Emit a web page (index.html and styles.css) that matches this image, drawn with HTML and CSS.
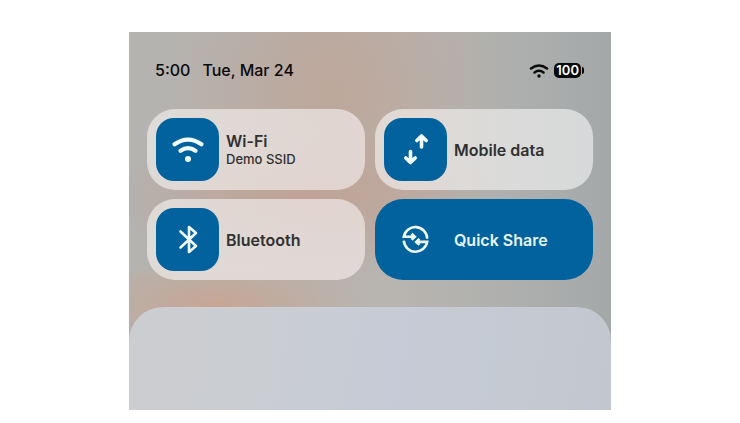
FILE: index.html
```html
<!DOCTYPE html>
<html lang="en">
<head>
    <meta charset="UTF-8">
    <meta name="viewport" content="width=device-width, initial-scale=1">
    <title>Quick Settings</title>
    <link rel="stylesheet" href="styles.css">
</head>
<body>

<main class="screen">
    <!-- status bar -->
    <header class="status-bar">
        <time>5:00</time>
        <span>Tue, Mar 24</span>
        <div class="status-icons">
            <svg class="status-wifi" viewBox="0 0 20 16" aria-hidden="true">
                <path d="M2 5.5Q10 -.5 18 5.5M5.5 9.5Q10 6 14.5 9.5"/>
                <circle cx="10" cy="13" r="1.7"/>
            </svg>
            <span class="battery">100</span>
        </div>
    </header>

    <!-- quick settings tiles -->
    <section class="tiles">
        <button class="tile" type="button">
            <span class="tile-icon">
                <svg viewBox="0 0 36 36" stroke-width="4.2" aria-hidden="true">
                    <path d="M4.5 12.3Q18 2.9 31.5 12.3M10.5 18.8Q18 13.6 25.5 18.8"/>
                    <circle class="dot" cx="18" cy="27" r="3"/>
                </svg>
            </span>
            <span class="tile-text">
                <span class="tile-label">Wi-Fi</span>
                <span class="tile-sub">Demo SSID</span>
            </span>
        </button>
        <button class="tile" type="button">
            <span class="tile-icon">
                <svg viewBox="0 0 36 36" stroke-width="3.6" aria-hidden="true">
                    <path d="M23.5 15V5M18.8 8.5L23.5 4L28.2 8.5M12.5 19.5V30M7.8 26L12.5 30.5L17.2 26"/>
                </svg>
            </span>
            <span class="tile-label">Mobile data</span>
        </button>
        <button class="tile" type="button">
            <span class="tile-icon">
                <svg viewBox="0 0 36 36" stroke-width="2.6" aria-hidden="true">
                    <path d="M10.5 9.5L26 24L19 30V5L26 11L10.5 25.5"/>
                </svg>
            </span>
            <span class="tile-label">Bluetooth</span>
        </button>
        <button class="tile tile-active" type="button">
            <span class="tile-icon">
                <svg class="share" viewBox="0 0 36 36" stroke-width="2.6" aria-hidden="true">
                    <path d="M16.5 14.7H5.8A11.8 11.8 0 0 1 29.2 16.7M13.6 11.7L16.8 14.7L13.6 17.7"/>
                    <path d="M18.5 19.9H29.2A11.8 11.8 0 0 1 5.8 18.7M21.4 16.9L18.2 19.9L21.4 22.9"/>
                </svg>
            </span>
            <span class="tile-label">Quick Share</span>
        </button>
    </section>

    <!-- notification sheet -->
    <section class="sheet"></section>
</main>

</body>
</html>
```
FILE: styles.css
```css
* {
    box-sizing: border-box;
}
body {
    margin: 0;
    padding: 32px 16px 0;
    background: #ffffff;
    font-family: Inter, "Liberation Sans", sans-serif;
}
.screen {
    max-width: 482px;
    margin: 0 auto;
    background:
        radial-gradient(ellipse 150px 50px at 18% 72%, #c7a695, rgba(199, 166, 149, 0)),
        radial-gradient(ellipse 200px 70px at 36% 44%, #c0a397, rgba(192, 163, 151, 0)),
        radial-gradient(ellipse 170px 200px at 42% 16%, #bda79b, rgba(189, 167, 155, 0)),
        linear-gradient(90deg, #b4b3b0, #b8b4af 55%, #b0b1af 75%, #a4a8a9);
}
/* status bar */
.status-bar {
    display: flex;
    align-items: center;
    gap: 12px;
    padding: 28px 26px;
    color: #0a0a0a;
    font-size: 16px;
    font-weight: 500;
    line-height: 21px;
}
.status-icons {
    display: flex;
    align-items: center;
    gap: 5px;
    margin-left: auto;
}
.status-wifi {
    width: 20px;
    height: 16px;
    fill: none;
    stroke: #0a0a0a;
    stroke-width: 2.5;
    stroke-linecap: round;
}
.status-wifi circle {
    fill: #0a0a0a;
    stroke: none;
}
.battery {
    position: relative;
    margin-right: 4px;
    padding: 0 2px;
    border-radius: 5px;
    background: #0a0a0a;
    color: #ffffff;
    font-size: 13px;
    font-weight: 600;
    line-height: 15px;
}
/* battery tip */
.battery::after {
    content: "";
    position: absolute;
    top: 4px;
    right: -3px;
    width: 2px;
    height: 7px;
    border-radius: 0 2px 2px 0;
    background: #0a0a0a;
}
/* tiles */
.tiles {
    display: grid;
    grid-template-columns: 1fr 1fr;
    gap: 9px 10px;
    padding: 0 18px 27px;
}
.tile {
    display: flex;
    align-items: center;
    gap: 7px;
    padding: 9px;
    border: none;
    border-radius: 28px;
    background: linear-gradient(100deg, rgba(240, 236, 233, 0.7), rgba(240, 232, 231, 0.7));
    color: #303030;
    font-family: inherit;
    text-align: left;
    cursor: pointer;
}
.tile:nth-child(2) {
    background: linear-gradient(90deg, rgba(240, 236, 233, 0.7), rgba(236, 237, 238, 0.7));
}
.tile-icon {
    display: flex;
    align-items: center;
    justify-content: center;
    width: 63px;
    height: 63px;
    border-radius: 18px;
    background: #02629d;
}
.tile-icon svg {
    width: 36px;
    height: 36px;
    fill: none;
    stroke: #f0fcff;
    stroke-linecap: round;
    stroke-linejoin: round;
}
.tile-icon .share {
    stroke-linecap: butt;
    stroke-linejoin: miter;
}
.tile-icon .dot {
    fill: #f0fcff;
    stroke: none;
}
.tile-text {
    display: flex;
    flex-direction: column;
}
.tile-label {
    font-size: 16px;
    font-weight: 600;
    line-height: 20px;
}
.tile-sub {
    font-size: 13px;
    font-weight: 500;
    line-height: 17px;
}
.tile.tile-active {
    background: #02629d;
    color: #e6f6ff;
}
/* notification sheet */
.sheet {
    height: 103px;
    border-radius: 34px 34px 0 0;
    background: linear-gradient(100deg, #cccdd0, #cacdd2 30%, #c6cbd7 55%, #c4cad3 75%, #c3c6ce);
}
```
